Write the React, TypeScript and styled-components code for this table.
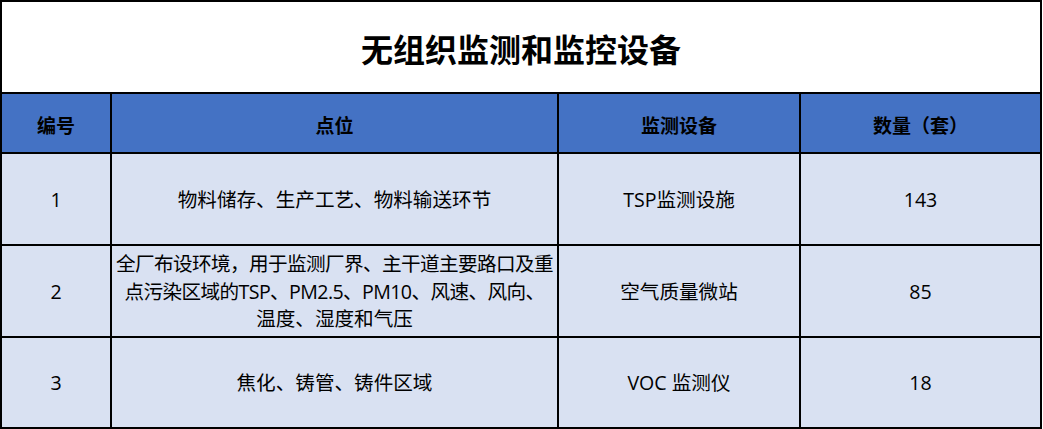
import React from "react";
import styled, { createGlobalStyle } from "styled-components";

const Global = createGlobalStyle`
  html, body { margin: 0; padding: 0; background: #ffffff; }
  body { font-family: "Open Sans", "Noto Sans CJK SC", sans-serif; color: #000; }
`;

const Grid = styled.div`
  display: grid;
  grid-template-columns: 108px 445px 240px 239px;
  grid-template-rows: 90px 58px 90px 90px 89px;
  gap: 2px;
  padding: 2px;
  width: 1042px;
  box-sizing: border-box;
  background: #000;
`;

const Title = styled.div`
  grid-column: 1 / -1;
  background: #fff;
  display: flex;
  align-items: center;
  justify-content: center;
  font-family: "Noto Sans CJK SC", sans-serif;
  font-weight: 700;
  font-size: 32px;
  padding-top: 2px;
`;

const Head = styled.div`
  background: #4472c4;
  display: flex;
  align-items: center;
  justify-content: center;
  font-family: "Noto Sans CJK SC", sans-serif;
  font-weight: 700;
  font-size: 19px;
  padding-top: 2px;
`;

const Cell = styled.div`
  background: #d9e1f2;
  display: flex;
  flex-direction: column;
  align-items: center;
  justify-content: center;
  text-align: center;
  font-size: 19.6px;
  line-height: 27.5px;
  padding-top: 1px;
  overflow: visible;
`;

const Line = styled.span<{ $tight?: boolean }>`
  white-space: nowrap;
  letter-spacing: ${(p) => (p.$tight ? "-0.6px" : "0")};
`;

const rows: { no: string; lines: string[]; device: string; qty: string }[] = [
  { no: "1", lines: ["物料储存、生产工艺、物料输送环节"], device: "TSP监测设施", qty: "143" },
  {
    no: "2",
    lines: [
      "全厂布设环境，用于监测厂界、主干道主要路口及重",
      "点污染区域的TSP、PM2.5、PM10、风速、风向、",
      "温度、湿度和气压",
    ],
    device: "空气质量微站",
    qty: "85",
  },
  { no: "3", lines: ["焦化、铸管、铸件区域"], device: "VOC 监测仪", qty: "18" },
];

export default function App() {
  return (
    <>
      <Global />
      <Grid>
        <Title>无组织监测和监控设备</Title>
        <Head>编号</Head>
        <Head>点位</Head>
        <Head>监测设备</Head>
        <Head>数量（套）</Head>
        {rows.map((r) => (
          <React.Fragment key={r.no}>
            <Cell>{r.no}</Cell>
            <Cell>
              {r.lines.map((l) => (
                <Line key={l} $tight={l.length > 22}>
                  {l}
                </Line>
              ))}
            </Cell>
            <Cell>{r.device}</Cell>
            <Cell>{r.qty}</Cell>
          </React.Fragment>
        ))}
      </Grid>
    </>
  );
}
